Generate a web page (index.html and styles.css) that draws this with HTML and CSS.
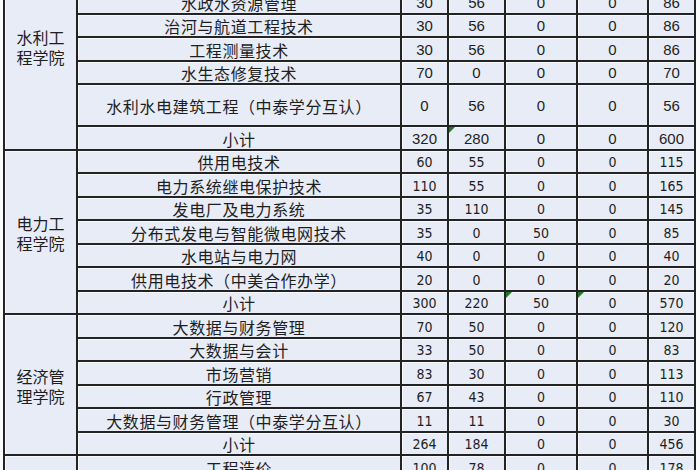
FILE: index.html
```html
<!DOCTYPE html>
<html lang="zh-CN">
<head>
<meta charset="utf-8">
<title>招生计划表</title>
<link rel="stylesheet" href="styles.css">
</head>
<body>
<div class="sheet">
<table class="grid">
<colgroup>
<col class="c-college"><col class="c-prog"><col class="c-a"><col class="c-b"><col class="c-c"><col class="c-d"><col class="c-e">
</colgroup>
<tbody>
<tr><td rowspan="8" class="college">水利工<br>程学院</td><td class="prog">水利工程</td><td>80</td><td>0</td><td>0</td><td>0</td><td>80</td></tr>
<tr><td class="prog">水利水电建筑工程</td><td>80</td><td>56</td><td>0</td><td>0</td><td>136</td></tr>
<tr><td class="prog">水政水资源管理</td><td>30</td><td>56</td><td>0</td><td>0</td><td>86</td></tr>
<tr><td class="prog">治河与航道工程技术</td><td>30</td><td>56</td><td>0</td><td>0</td><td>86</td></tr>
<tr><td class="prog">工程测量技术</td><td>30</td><td>56</td><td>0</td><td>0</td><td>86</td></tr>
<tr><td class="prog">水生态修复技术</td><td>70</td><td>0</td><td>0</td><td>0</td><td>70</td></tr>
<tr class="tall"><td class="prog">水利水电建筑工程（中泰学分互认）</td><td>0</td><td>56</td><td>0</td><td>0</td><td>56</td></tr>
<tr><td class="prog">小计</td><td>320</td><td class="mark">280</td><td>0</td><td>0</td><td>600</td></tr>

<tr class="alt"><td rowspan="7" class="college">电力工<br>程学院</td><td class="prog">供用电技术</td><td>60</td><td>55</td><td>0</td><td>0</td><td>115</td></tr>
<tr class="alt"><td class="prog">电力系统继电保护技术</td><td>110</td><td>55</td><td>0</td><td>0</td><td>165</td></tr>
<tr class="alt"><td class="prog">发电厂及电力系统</td><td>35</td><td>110</td><td>0</td><td>0</td><td>145</td></tr>
<tr class="alt"><td class="prog">分布式发电与智能微电网技术</td><td>35</td><td>0</td><td>50</td><td>0</td><td>85</td></tr>
<tr class="alt"><td class="prog">水电站与电力网</td><td>40</td><td>0</td><td>0</td><td>0</td><td>40</td></tr>
<tr class="alt"><td class="prog">供用电技术（中美合作办学）</td><td>20</td><td>0</td><td>0</td><td>0</td><td>20</td></tr>
<tr class="alt"><td class="prog">小计</td><td>300</td><td>220</td><td class="mark">50</td><td class="mark">0</td><td>570</td></tr>

<tr class="alt"><td rowspan="6" class="college">经济管<br>理学院</td><td class="prog">大数据与财务管理</td><td>70</td><td>50</td><td>0</td><td>0</td><td>120</td></tr>
<tr class="alt"><td class="prog">大数据与会计</td><td>33</td><td>50</td><td>0</td><td>0</td><td>83</td></tr>
<tr class="alt"><td class="prog">市场营销</td><td>83</td><td>30</td><td>0</td><td>0</td><td>113</td></tr>
<tr class="alt"><td class="prog">行政管理</td><td>67</td><td>43</td><td>0</td><td>0</td><td>110</td></tr>
<tr class="alt"><td class="prog">大数据与财务管理（中泰学分互认）</td><td>11</td><td>11</td><td>0</td><td>0</td><td>30</td></tr>
<tr class="alt"><td class="prog">小计</td><td>264</td><td>184</td><td>0</td><td>0</td><td>456</td></tr>

<tr class="alt"><td rowspan="3" class="college">建筑工<br>程学院</td><td class="prog">工程造价</td><td>100</td><td>78</td><td>0</td><td>0</td><td>178</td></tr>
<tr class="alt"><td class="prog">建筑工程技术</td><td>60</td><td>40</td><td>0</td><td>0</td><td>100</td></tr>
<tr class="alt"><td class="prog">小计</td><td>160</td><td>118</td><td>0</td><td>0</td><td>278</td></tr>
</tbody>
</table>
</div>
</body>
</html>
```

FILE: styles.css
```css
html, body {
  margin: 0;
  padding: 0;
  background: #fafbfd;
}

.sheet {
  height: 470px;
  overflow: hidden;
}

.grid {
  margin: -58px 0 0 3px;
  width: 693px;
  table-layout: fixed;
  border-collapse: collapse;
  font-family: "Liberation Sans", "Noto Sans CJK SC", sans-serif;
  font-size: 15px;
  color: #1e1e1e;
}

.c-college { width: 73px; }
.c-prog { width: 324px; }
.c-a { width: 47px; }
.c-b { width: 57px; }
.c-c { width: 72px; }
.c-d { width: 71px; }
.c-e { width: 47px; }

.grid tr {
  height: 23.5px;
}

.grid tr.tall {
  height: 42px;
}

.grid td {
  border: 2px solid #232323;
  background: #e8ecf7;
  box-shadow: inset 1px 1px 0 #f8f9fd;
  text-align: center;
  vertical-align: middle;
  padding: 2px 0 0;
  line-height: 18px;
  white-space: nowrap;
}

.grid tr.alt td {
  font-family: "DejaVu Sans", "Noto Sans CJK SC", sans-serif;
  font-stretch: condensed;
  font-size: 14px;
}

.grid td.prog,
.grid tr.alt td.prog {
  font-family: "Noto Sans CJK SC", sans-serif;
  font-size: 16px;
  letter-spacing: 0.6px;
}

.grid td.college,
.grid tr.alt td.college {
  font-family: "Noto Sans CJK SC", sans-serif;
  font-size: 16px;
  line-height: 20px;
  padding-top: 2px;
}

.grid td.mark {
  position: relative;
}

.grid td.mark::before {
  content: "";
  position: absolute;
  top: 0;
  left: 0;
  border-top: 6px solid #1f7a22;
  border-right: 6px solid transparent;
}
```
